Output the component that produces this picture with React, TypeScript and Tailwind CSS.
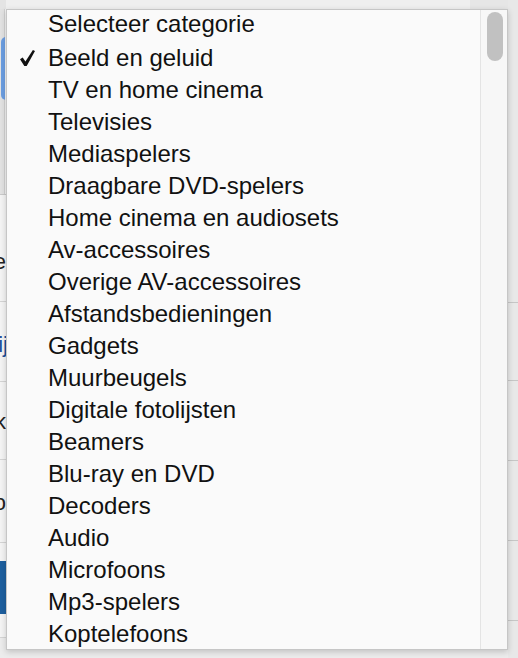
import React from "react";

const items = [
  "Selecteer categorie",
  "Beeld en geluid",
  "TV en home cinema",
  "Televisies",
  "Mediaspelers",
  "Draagbare DVD-spelers",
  "Home cinema en audiosets",
  "Av-accessoires",
  "Overige AV-accessoires",
  "Afstandsbedieningen",
  "Gadgets",
  "Muurbeugels",
  "Digitale fotolijsten",
  "Beamers",
  "Blu-ray en DVD",
  "Decoders",
  "Audio",
  "Microfoons",
  "Mp3-spelers",
  "Koptelefoons",
];

const selected = 1;

function Check() {
  return (
    <svg width="15" height="16" viewBox="0 0 15 16" className="absolute left-[13px] top-[8px]">
      <path d="M0 9.3 L2.7 7.6 L5.4 11.4 L12.9 0 L15 1.1 L6.7 16 L4.3 16 Z" fill="#111" />
    </svg>
  );
}

export default function App() {
  return (
    <div className="relative w-[518px] h-[658px] overflow-hidden bg-[#ececec] font-['Liberation_Sans',Arial,sans-serif]">
      {/* page behind the open select */}
      <div className="flex flex-col w-full">
        <div className="h-[9px] flex">
          <div className="w-[6px] bg-[#e4e4e4]" />
          <div className="flex-1 bg-[#efefef]" />
          <div className="w-[48px] bg-[#e6e6e6]" />
        </div>
        <div className="h-[186px] flex border-b border-[#c9c9c9]">
          <div className="w-[5px] bg-[#e2e2e2] border-r border-[#d0d0d0] pt-[28px]">
            <div className="ml-[1px] h-[63px] w-[5px] rounded-tl-[6px] rounded-bl-[6px] bg-[#6b9de0]" />
          </div>
          <div className="flex-1 bg-[#f2f2f2]" />
        </div>
        <div className="h-[107px] flex border-b border-[#d4d4d4] bg-[#f4f4f4] pt-[54px]">
          <div className="w-[6px] flex justify-end whitespace-nowrap text-[22px] leading-[25px] text-[#222]">Type</div>
        </div>
        <div className="h-[80px] flex border-b border-[#d4d4d4] bg-[#f4f4f4] pt-[30px]">
          <div className="w-[8px] flex justify-end whitespace-nowrap text-[22px] leading-[25px] text-[#1b4f9a]">Bij</div>
        </div>
        <div className="h-[78px] flex border-b border-[#d4d4d4] bg-[#f4f4f4] pt-[27px]">
          <div className="w-[6px] flex justify-end whitespace-nowrap text-[22px] leading-[25px] text-[#222]">Ok</div>
        </div>
        <div className="h-[83px] flex border-b border-[#d4d4d4] bg-[#f4f4f4] pt-[30px]">
          <div className="w-[6px] flex justify-end whitespace-nowrap text-[22px] leading-[25px] text-[#222]">Info</div>
        </div>
        <div className="h-[95px] flex border-b border-[#d4d4d4] bg-[#f4f4f4] pt-[18px]">
          <div className="h-[53px] w-[6px] bg-[#1d5f9e]" />
        </div>
        <div className="h-[30px] bg-[#ececec]" />
      </div>

      {/* right strip lines */}
      <div className="absolute right-0 top-0 w-[10px] h-full flex flex-col bg-[#e8e8e8]">
        <div className="h-[303px] border-b border-[#c6c6c6]" />
        <div className="h-[78px] border-b border-[#c6c6c6]" />
        <div className="h-[80px] border-b border-[#c6c6c6]" />
        <div className="h-[80px] border-b border-[#c6c6c6]" />
        <div className="h-[80px] border-b border-[#c6c6c6]" />
      </div>

      {/* native select popup */}
      <div className="absolute left-[6px] top-[9px] w-[502px] h-[641px] flex bg-[#fafafa] border border-[#c6c6c6] shadow-[0_2px_6px_rgba(0,0,0,0.18)] overflow-hidden">
        <ul className="flex-1 text-[24px] text-[#111]">
          {items.map((label, i) => (
            <li
              key={label}
              className={
                i === 0
                  ? "relative h-[32px] leading-[28px] pl-[41px] whitespace-nowrap"
                  : "relative h-[32px] leading-[32px] pl-[41px] whitespace-nowrap"
              }
            >
              {i === selected && <Check />}
              {label}
            </li>
          ))}
        </ul>
        <div className="w-[27px] border-l border-[#e4e4e4] bg-[#f7f7f7] pt-[2px] pl-[6px]">
          <div className="w-[16px] h-[49px] rounded-full bg-[#c1c1c1]" />
        </div>
      </div>
    </div>
  );
}
